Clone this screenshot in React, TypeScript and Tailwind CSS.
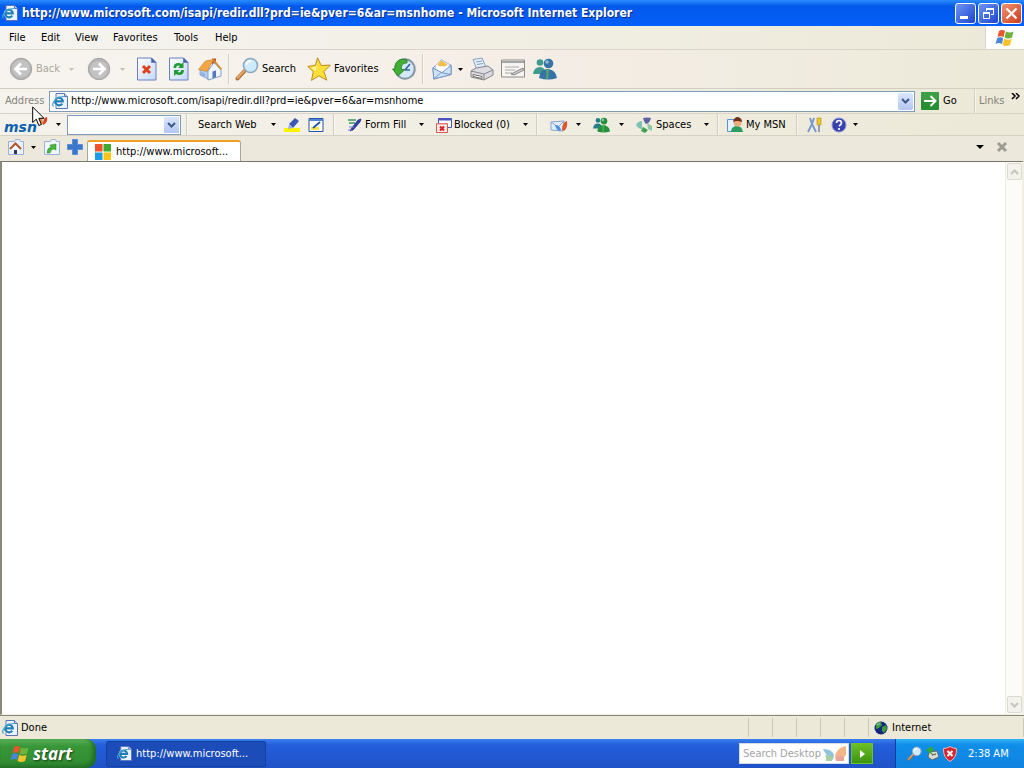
import type { ReactNode } from "react";

const pageUrl = "http://www.microsoft.com/isapi/redir.dll?prd=ie&pver=6&ar=msnhome";

function Caret({ dim = false }: { dim?: boolean }) {
  return (
    <svg viewBox="0 0 5 3" className={dim ? "h-[3px] w-[5px] text-[#c4c0b4]" : "h-[3px] w-[5px] text-black"}>
      <path d="M0 0h5L2.500 3z" fill="currentColor" />
    </svg>
  );
}

function Drop({ label, dim = false }: { label: string; dim?: boolean }) {
  return (
    <button aria-label={label} className="flex h-5 w-4 shrink-0 items-center justify-center">
      <Caret dim={dim} />
    </button>
  );
}

function Sep() {
  return <div className="w-[2px] shrink-0 self-stretch border-l border-[#cfccc0] bg-white/60" />;
}

function Tool({ label, children, className }: { label: string; children: ReactNode; className: string }) {
  return (
    <button aria-label={label} className={`flex shrink-0 items-center whitespace-nowrap ${className}`}>
      {children}
    </button>
  );
}

function IeIcon({ className = "h-4 w-4" }: { className?: string }) {
  return (
    <svg viewBox="0 0 16 16" className={`shrink-0 ${className}`}>
      <path d="M4 .5h8.500l3 3v12H4z" fill="#eaf2ff" stroke="#5a74b8" />
      <path d="M12.500.5v3h3" fill="#c0d0f0" stroke="#5a74b8" />
      <circle cx="6.800" cy="8.500" r="5" fill="#fff" />
      <path d="M10.200 10.600a3.800 3.800 0 1 1 .6-2.200H3.500" fill="none" stroke="#1f7fb5" strokeWidth="2.200" />
      <path d="M1.500 13.500C-1.500 10 5 3.500 12.500 3.500" fill="none" stroke="#45a5d0" strokeWidth="1.200" />
    </svg>
  );
}

function WindowsFlag({ className }: { className: string }) {
  return (
    <svg viewBox="0 0 20 18" className={className}>
      <path d="M4 2q3-2 6 0L8.500 8q-3-1.500-6 0z" fill="#e8562a" />
      <path d="M11 2.500q4 2 7.500 0L17 8.500q-4 2-7.500 0z" fill="#6fb33d" />
      <path d="M2.200 9q3-1.500 6 0L7 15q-3-2-6.500 0z" fill="#4a86d8" />
      <path d="M9.200 9.700q4 2 7.500 0L15 16q-3.500 2-7.500 0z" fill="#f6c22c" />
    </svg>
  );
}

function RoundArrow({ flip = false }: { flip?: boolean }) {
  return (
    <svg viewBox="0 0 24 24" className={flip ? "h-6 w-6 rotate-180" : "h-6 w-6"}>
      <circle cx="12" cy="12" r="10.700" fill="#b5b5b5" stroke="#a4a4a4" />
      <circle cx="12" cy="11.500" r="8.800" fill="#c3c3c3" />
      <path d="M18 12H7M12 6.500 6.500 12l5.500 5.500" fill="none" stroke="#fff" strokeWidth="2.600" />
    </svg>
  );
}

function PageIcon({ children }: { children: ReactNode }) {
  return (
    <svg viewBox="0 0 20 24" className="h-6 w-5">
      <defs>
        <linearGradient id="page" x1="0" y1="0" x2="1" y2="1">
          <stop offset="0" stopColor="#ffffff" />
          <stop offset="1" stopColor="#c3d8fb" />
        </linearGradient>
      </defs>
      <path d="M.5 1h14L19 5.500V23H.5z" fill="url(#page)" stroke="#6a80c0" />
      <path d="M14.500 1v4.500H19z" fill="#3f62b4" stroke="#4a68b2" strokeWidth=".6" />
      {children}
    </svg>
  );
}

function HomeIcon() {
  return (
    <svg viewBox="0 0 24 24" className="h-6 w-6">
      <path d="M14 1.500h4v6h-4z" fill="#c8521f" />
      <path d="m2 13 5-7 5 7v10L2 18z" fill="#b5cdf0" stroke="#7694bf" strokeWidth=".7" />
      <path d="M10 23v-9l6-8.500 7 7.500v6z" fill="#eef5ff" stroke="#6c8fc2" strokeWidth=".8" />
      <path d="m.5 12.500 7-8.500 8-1.500-6.500 12z" fill="#f4a545" stroke="#c7852c" strokeWidth=".7" />
      <path d="m15.500 3 8 9.500" stroke="#d98b32" strokeWidth="1.600" />
      <path d="M14.500 14.500 18 13.500v6.800l-3.500 1.200z" fill="#5578ba" />
      <path d="m3 15 4 1.500v3.500L3 18z" fill="#8fb2e4" />
    </svg>
  );
}

function Magnifier({ className }: { className: string }) {
  return (
    <svg viewBox="0 0 24 24" className={className}>
      <path d="m9.500 14-7 7.500" stroke="#b06a2c" strokeWidth="4" strokeLinecap="round" />
      <path d="m9 14-6.500 7" stroke="#e5a868" strokeWidth="2" strokeLinecap="round" />
      <circle cx="15.500" cy="8.500" r="7" fill="#cdebfb" stroke="#8ba6c6" strokeWidth="1.600" />
      <path d="M11 8q1-4 5-4" fill="none" stroke="#fff" strokeWidth="2" />
    </svg>
  );
}

function StarIcon() {
  return (
    <svg viewBox="0 0 24 24" className="h-6 w-6">
      <path d="m10.500.8 3.700 7.700 9.200-.4-6.500 6.500 3 8.600-8-4.400-7.400 4.600 1.800-8.800L.8 9.500l7.700-1.300z" fill="#fddf37" stroke="#b98d1d" />
      <path d="m10.500 4-1.300 5.500-5 1 4.500 3.500z" fill="#fff6a8" />
    </svg>
  );
}

function HistoryIcon() {
  return (
    <svg viewBox="0 0 24 24" className="h-6 w-6">
      <circle cx="13" cy="12" r="9.700" fill="#d3e9f8" stroke="#8596a6" strokeWidth="2" />
      <path d="m13 13 5-6M13 13h5" stroke="#37659b" strokeWidth="1.700" />
      <path d="M15 3C8 0 2 5 3 12H.5l5.500 7 7-6.500H9.500C9 8 11 6 15 6z" fill="#43ae35" stroke="#247a24" strokeWidth=".8" />
    </svg>
  );
}

function MailIcon() {
  return (
    <svg viewBox="0 0 22 24" className="h-6 w-[22px]">
      <path d="m1 11 9-9 11 6v10L2 23z" fill="#cfe2fb" stroke="#6f8ec5" />
      <path d="m4 8 6-6 9 5-1 5-7 4-7-4z" fill="#fff" stroke="#b7c6dd" strokeWidth=".7" />
      <path d="m6 7 4-4.500 7 4.500-2 2H8z" fill="#f5bc4c" />
      <path d="m1 11 10 5 10-8v10L2 23z" fill="#cbe3fb" stroke="#6f8ec5" />
      <path d="m2 23 8-7 11 2" fill="none" stroke="#6f8ec5" />
    </svg>
  );
}

function PrinterIcon() {
  return (
    <svg viewBox="0 0 24 24" className="h-6 w-6">
      <path d="m3 2.500 9-1.500 4 9-9 3z" fill="#e0edfd" stroke="#8ba0c0" />
      <path d="m6 5 6-1M7 7.500l6-1" stroke="#8ba0c0" />
      <path d="m1 14 5-3 12-2 5 4v5l-9 5-13-3z" fill="#dcdce0" stroke="#85858d" />
      <path d="m1 14 13 3 9-4M14 17v6" fill="none" stroke="#85858d" />
      <path d="m3 17.500 9 2v2l-9-2z" fill="#fff" stroke="#555" strokeWidth=".8" />
    </svg>
  );
}

function EditIcon() {
  return (
    <svg viewBox="0 0 24 20" className="h-5 w-6">
      <path d="M.5 1h23v17H.5z" fill="#f6f5f1" stroke="#8d8d8d" />
      <path d="M1 3h22" stroke="#a5a5a5" strokeWidth="2" />
      <path d="M4 8h14M4 11h10M4 14h7" stroke="#aaa" />
      <path d="m10 15 12-6 1 2-10 5z" fill="#ccc" stroke="#888" />
    </svg>
  );
}

function PeopleIcon({ className, front, back }: { className: string; front: string; back: string }) {
  return (
    <svg viewBox="0 0 24 22" className={className}>
      <circle cx="7" cy="4.500" r="3.300" fill={back} />
      <path d="M0 16q1-7 7-7 5 0 6 7z" fill={back} />
      <circle cx="15.500" cy="5.500" r="4.800" fill={front} />
      <path d="M6 20q1-9 9-9 8 1 9 9-9 3-18 0z" fill={front} />
      <path d="M13 21q1-5 0-9l3-1-1 10z" fill="#62bd4b" opacity=".7" />
      <circle cx="14" cy="4" r="1.800" fill="#fff" opacity=".5" />
    </svg>
  );
}

function MsnLogo() {
  return (
    <svg viewBox="0 0 45 20" className="h-5 w-[45px]">
      <text x="0" y="17" fontFamily="DejaVu Sans, sans-serif" fontSize="14" fontWeight="700" fontStyle="italic" fill="#0a62ad">msn</text>
      <path d="M34 8q-1-6 3-6 2 2 2 7-2 2-5-1z" fill="#f08a3c" />
      <path d="M39 10q0-8 4-8 1.500 5-4 8z" fill="#d9442c" />
    </svg>
  );
}

function Butterfly({ className }: { className: string }) {
  return (
    <svg viewBox="0 0 24 15" className={className}>
      <path d="M0 3q9 0 11 6l-1 5Q3 10 0 3z" fill="#8fc3dc" />
      <path d="M2 9q5 0 8 2l-1 4H3q1-3-1-6z" fill="#a9cf9f" />
      <path d="M12 9q3-8 11-9v9q-4 5-10 3z" fill="#f4b688" />
      <path d="M12 11q5-2 9 0v4h-8z" fill="#e9a597" />
    </svg>
  );
}

function DropArrow() {
  return (
    <svg viewBox="0 0 9 6" className="h-[6px] w-[9px]">
      <path d="m1 1 3.500 3.500L8 1" fill="none" stroke="#3f5684" strokeWidth="2" />
    </svg>
  );
}

function TitleBar() {
  return (
    <header className="flex h-[26px] shrink-0 items-center bg-linear-to-b from-[#2a8bff] via-[#0358ea] via-25% to-[#0560fb] pr-[2px] pl-[2px] text-white">
      <IeIcon />
      <h1 className="ml-1 flex-1 truncate font-[DejaVu_Sans_Condensed,sans-serif] text-[12px] font-bold [text-shadow:1px_1px_#0a2c8a]">
        {pageUrl} - Microsoft Internet Explorer
      </h1>
      <div className="flex gap-[2px]">
        <button aria-label="Minimize" className="flex h-[21px] w-[21px] items-center justify-center rounded-[3px] border border-white bg-linear-to-br from-[#6f92f2] to-[#1c44cf]">
          <svg viewBox="0 0 19 19" className="h-[19px] w-[19px]"><path d="M4 12h8v3H4z" fill="#fff" /></svg>
        </button>
        <button aria-label="Restore" className="flex h-[21px] w-[21px] items-center justify-center rounded-[3px] border border-white bg-linear-to-br from-[#6f92f2] to-[#1c44cf]">
          <svg viewBox="0 0 19 19" className="h-[19px] w-[19px]" fill="none" stroke="#fff">
            <path d="M7.500 7V4.500h7v6H12" /><path d="M7 5h8" strokeWidth="2" />
            <path d="M4.500 8.500h6v6h-6z" /><path d="M4 9h7" strokeWidth="2" />
          </svg>
        </button>
        <button aria-label="Close" className="flex h-[21px] w-[21px] items-center justify-center rounded-[3px] border border-white bg-linear-to-br from-[#f0906f] to-[#cc3a12]">
          <svg viewBox="0 0 19 19" className="h-[19px] w-[19px]"><path d="m4.500 4.500 10 10M14.500 4.500l-10 10" stroke="#fff" strokeWidth="2.200" /></svg>
        </button>
      </div>
    </header>
  );
}

function MenuBar() {
  return (
    <nav className="flex h-6 shrink-0 items-center border-b border-[#d8d4c8] bg-linear-to-r from-[#f6f4f0] to-[#ece9d8] pl-[9px]">
      <button className="w-8 text-left">File</button>
      <button className="w-[34px] text-left">Edit</button>
      <button className="w-[38px] text-left">View</button>
      <button className="w-[61px] text-left">Favorites</button>
      <button className="w-[41px] text-left">Tools</button>
      <button className="w-8 text-left">Help</button>
      <div className="ml-auto flex h-full w-[39px] items-center justify-center border-l border-[#d8d4c8] bg-white">
        <WindowsFlag className="h-[18px] w-5" />
      </div>
    </nav>
  );
}

function StandardButtons() {
  return (
    <div className="flex h-[39px] shrink-0 items-center border-b border-[#d2cfc2] bg-linear-to-r from-[#f7f4ef] via-[#f5eee7] to-[#ece9d8] py-1 pl-[9px]">
      <Tool label="Back" className="w-[54px] gap-[3px] text-[#aaa79c]"><RoundArrow />Back</Tool>
      <Drop label="Back history" dim />
      <Tool label="Forward" className="ml-2 w-[27px]"><RoundArrow flip /></Tool>
      <Drop label="Forward history" dim />
      <Tool label="Stop" className="ml-[7px] w-8">
        <PageIcon><path d="m6 9 7 7M13 9l-7 7" stroke="#e2401b" strokeWidth="3" /></PageIcon>
      </Tool>
      <Tool label="Refresh" className="w-[29px]">
        <PageIcon>
          <path d="M4.500 11q0-5 5-5 2 0 3 1l2-2v6H9l2-2q-3-1.500-4 2z" fill="#249a34" />
          <path d="M15 13q0 5-5 5-2 0-3-1l-2 2v-6h5.500l-2 2q3 1.500 4-2z" fill="#249a34" />
        </PageIcon>
      </Tool>
      <Tool label="Home" className="w-[30px]"><HomeIcon /></Tool>
      <Sep />
      <Tool label="Search" className="ml-[5px] w-[72px] gap-[3px]"><Magnifier className="h-6 w-6" />Search</Tool>
      <Tool label="Favorites" className="w-[85px] gap-[3px]"><StarIcon />Favorites</Tool>
      <Tool label="History" className="w-[30px]"><HistoryIcon /></Tool>
      <Sep />
      <Tool label="Mail" className="ml-2 w-5"><MailIcon /></Tool>
      <Drop label="Mail options" />
      <Tool label="Print" className="ml-[2px] w-[31px]"><PrinterIcon /></Tool>
      <Tool label="Edit" className="w-8"><EditIcon /></Tool>
      <Tool label="Messenger" className="w-8"><PeopleIcon className="h-[22px] w-6" front="#3573a8" back="#3f9c8c" /></Tool>
    </div>
  );
}

function AddressBar() {
  return (
    <form className="flex h-[25px] shrink-0 items-center border-b border-[#d8d4c8] bg-linear-to-r from-[#f6f3ee] to-[#ece9d8] pl-[5px]">
      <label htmlFor="address" className="w-11 text-[#85837a]">Address</label>
      <div className="flex h-[21px] flex-1 items-center border border-[#7f9db9] bg-white pr-px pl-[2px]">
        <IeIcon />
        <input id="address" defaultValue={pageUrl} className="h-4 min-w-0 flex-1 pl-[3px] outline-none" />
        <button type="button" aria-label="Address history" className="flex h-[17px] w-[15px] items-center justify-center rounded-[2px] bg-linear-to-b from-[#dbe5fe] to-[#b3c7f4]"><DropArrow /></button>
      </div>
      <button type="button" className="ml-[6px] flex w-[53px] items-center gap-1">
        <svg viewBox="0 0 18 18" className="h-[18px] w-[18px]">
          <rect width="18" height="18" rx="1" fill="#288f35" />
          <path d="M0 0h18v8H0z" fill="#4fae54" opacity=".5" />
          <path d="M3 9h11M9.500 4l5 5-5 5" fill="none" stroke="#fff" strokeWidth="2" />
        </svg>
        Go
      </button>
      <Sep />
      <button type="button" className="ml-[3px] flex w-[45px] items-start text-[#85837a]">
        <span className="w-8 text-left">Links</span>
        <svg viewBox="0 0 9 7" className="h-[7px] w-[9px]"><path d="m1 0 3 3-3 3M5 0l3 3-3 3" fill="none" stroke="#000" strokeWidth="1.500" /></svg>
      </button>
    </form>
  );
}

function MsnToolbar() {
  return (
    <div className="flex h-[22px] shrink-0 items-center border-b border-[#d5d2c5] bg-linear-to-r from-[#f5f2ec] to-[#ece9d8] pl-1">
      <Tool label="MSN" className="w-[46px]"><MsnLogo /></Tool>
      <Drop label="MSN menu" />
      <div className="ml-px flex h-5 w-[114px] items-center border border-[#7f9db9] bg-white pr-px">
        <input aria-label="Search terms" className="h-4 min-w-0 flex-1 px-1 outline-none" />
        <button aria-label="Recent searches" className="flex h-4 w-[15px] items-center justify-center bg-linear-to-b from-[#dbe5fe] to-[#b3c7f4]"><DropArrow /></button>
      </div>
      <div className="ml-[5px] flex self-stretch"><Sep /></div>
      <Tool label="Search Web" className="ml-[10px] w-[67px]">Search Web</Tool>
      <Drop label="Search options" />
      <Tool label="Highlight" className="ml-[3px] w-6">
        <svg viewBox="0 0 16 16" className="h-4 w-4">
          <path d="M0 11h16v4H0z" fill="#fff200" />
          <path d="m5 7 6-6 4 3-6 7z" fill="#3c57b4" /><path d="m5 7 4 4-5 1z" fill="#9bb0e0" />
        </svg>
      </Tool>
      <Tool label="Highlight options" className="w-[25px]">
        <svg viewBox="0 0 16 16" className="h-4 w-4">
          <path d="M1 1.500h14v13H1z" fill="#fff" stroke="#2b55a0" /><path d="M1 3h14" stroke="#4e84d4" strokeWidth="2" />
          <path d="M3 10h8v3H3z" fill="#f5e94a" /><path d="m5 11 7-6" stroke="#2b55a0" strokeWidth="2" />
        </svg>
      </Tool>
      <Sep />
      <Tool label="Form Fill" className="ml-3 w-[66px] gap-[2px]">
        <svg viewBox="0 0 16 16" className="h-4 w-4">
          <path d="M1 3h8M2 6h6" stroke="#3b9a63" strokeWidth="1.500" />
          <path d="m4 12 7-9 3-1-1 3-7 8-3 1z" fill="#3442ae" stroke="#1a247c" strokeWidth=".7" /><path d="M2 10h5M1 13h4" stroke="#7a7fd8" />
        </svg>
        Form Fill
      </Tool>
      <Drop label="Form fill options" />
      <Tool label="Blocked (0)" className="ml-[7px] w-[81px] gap-[2px]">
        <svg viewBox="0 0 16 16" className="h-4 w-4">
          <path d="M2.500 1.500h13v9h-13z" fill="#fff" stroke="#4a55be" /><path d="M2 2.500h14" stroke="#4a55be" strokeWidth="2" />
          <path d="M.5 6.500h11v9H.5z" fill="#ffeaea" stroke="#d25a5a" /><path d="M.5 7h11" stroke="#e08a8a" />
          <path d="m4 9.500 4 4M8 9.500l-4 4" stroke="#d42222" strokeWidth="2" />
        </svg>
        Blocked (0)
      </Tool>
      <Drop label="Blocked options" />
      <div className="ml-[3px] flex self-stretch"><Sep /></div>
      <Tool label="Hotmail" className="ml-3 w-5">
        <svg viewBox="0 0 18 16" className="h-4 w-[18px]">
          <path d="m1 5 13-1-1 10-12-1z" fill="#e1eefb" stroke="#8aa4d2" /><path d="m1 5 7 5 6-6" fill="none" stroke="#8aa4d2" />
          <path d="M11 13q-1-5-6-5 1 5 5 6z" fill="#4b8fe0" /><path d="M12 13q0-8 5-9 1 7-3 10z" fill="#e0562c" />
        </svg>
      </Tool>
      <Drop label="Mail menu" />
      <Tool label="Messenger contacts" className="ml-[7px] w-5"><PeopleIcon className="h-4 w-[17px]" front="#25913d" back="#277d8b" /></Tool>
      <Drop label="Contacts menu" />
      <Tool label="Spaces" className="ml-[7px] w-[62px] gap-1">
        <svg viewBox="0 0 16 16" className="h-4 w-4">
          <path d="M0 8q2-4 6-4v8q-4 0-6-4z" fill="#7fc3b4" /><path d="M7 1q4-1 8 0-1 5-5 6-2-2-3-6z" fill="#5a62a4" />
          <path d="m11 6 5 3v5l-4-2z" fill="#8cc9a3" /><path d="m7 10 5 3-3 3-4-2z" fill="#3fa253" />
        </svg>
        Spaces
      </Tool>
      <Drop label="Spaces menu" />
      <div className="ml-[3px] flex self-stretch"><Sep /></div>
      <Tool label="My MSN" className="ml-2 w-[69px] gap-[3px]">
        <svg viewBox="0 0 16 16" className="h-4 w-4">
          <path d="M.5 2.500h9v12h-9z" fill="#e4f1ff" stroke="#5e92cf" /><path d="M4 14q1-5 6-5 5 0 6 6H4z" fill="#2c9d62" />
          <circle cx="10.500" cy="5.500" r="4" fill="#efae79" /><path d="M6 5q1-5 5-5 4 1 4 5-5-2-9 0z" fill="#702f1b" />
        </svg>
        My MSN
      </Tool>
      <Sep />
      <Tool label="Settings" className="ml-[9px] w-6">
        <svg viewBox="0 0 15 16" className="h-4 w-[15px]">
          <path d="M1 15 5 7 3 1M9 15 5 7l2-6" fill="none" stroke="#7a9bcd" strokeWidth="2" />
          <path d="M10 1h4v7h-4z" fill="#eec82a" stroke="#a88b17" strokeWidth=".6" /><path d="M12 8v7" stroke="#7089ad" strokeWidth="1.500" />
        </svg>
      </Tool>
      <Tool label="Help" className="w-4">
        <svg viewBox="0 0 16 16" className="h-4 w-4">
          <circle cx="8" cy="8" r="7" fill="#3842ae" stroke="#8b92da" />
          <path d="M5.500 6q0-2.500 2.500-2.500T10.500 6Q10.500 7.500 8 9M8 11v2" fill="none" stroke="#fff" strokeWidth="1.700" />
        </svg>
      </Tool>
      <Drop label="Help menu" />
    </div>
  );
}

function TabBar() {
  return (
    <div className="flex h-[25px] shrink-0 items-start bg-[#ece9dc] pr-4 pl-2">
      <Tool label="Home tab" className="h-[22px] w-[17px]">
        <svg viewBox="0 0 16 16" className="h-4 w-4">
          <path d="M.5 2.500h6l1-2h4l1 2h3v13H.5z" fill="#e9f1fe" stroke="#9ab2da" />
          <path d="m2 10 5.500-5.500L13 10" fill="none" stroke="#b4562a" strokeWidth="2" /><path d="M4 10l3.500-3.500L11 10v5H4z" fill="#f6faff" /><path d="M6 11h3v4H6z" fill="#28355e" />
        </svg>
      </Tool>
      <div className="flex h-[22px] items-center"><Drop label="Home options" /></div>
      <Tool label="Open tabs" className="ml-[3px] h-[22px] w-[23px]">
        <svg viewBox="0 0 16 16" className="h-4 w-4">
          <path d="M.5 2.500h6l1-2h4l1 2h3v13H.5z" fill="#eef5fb" stroke="#9ab2da" />
          <path d="M3 14q0-5 4-6L6 6l6-1v6l-2-1q-3 0-4 4z" fill="#49b33a" stroke="#2b8a2b" strokeWidth=".5" />
        </svg>
      </Tool>
      <Tool label="New tab" className="h-[22px] w-5">
        <svg viewBox="0 0 16 16" className="h-4 w-4"><path d="M5.500.5h5v5h5v5h-5v5h-5v-5h-5v-5h5z" fill="#3a77c9" stroke="#5a8fd6" /></svg>
      </Tool>
      <button className="flex h-[21px] w-[154px] items-center gap-[5px] self-end rounded-t-[3px] border border-t-2 border-b-0 border-[#a9a798] border-t-[#f0a020] bg-white pl-[7px]">
        <svg viewBox="0 0 16 16" className="h-4 w-4">
          <path d="M0 0h7.500v7.500H0z" fill="#f0502a" /><path d="M8.500 0H16v7.500H8.500z" fill="#3dab2b" />
          <path d="M0 8.500h7.500V16H0z" fill="#1d9be8" /><path d="M8.500 8.500H16V16H8.500z" fill="#fbc314" />
        </svg>
        http://www.microsoft...
      </button>
      <div className="ml-auto flex h-[22px] items-center gap-3">
        <button aria-label="Tab list" className="flex h-5 w-2 items-center justify-center">
          <svg viewBox="0 0 8 4" className="h-1 w-2"><path d="M0 0h8L4 4z" /></svg>
        </button>
        <button aria-label="Close tab">
          <svg viewBox="0 0 12 12" className="h-3 w-3"><path d="m2 2 8 8M10 2l-8 8" stroke="#9d9b90" strokeWidth="3" /></svg>
        </button>
      </div>
    </div>
  );
}

function ScrollButton({ down = false }: { down?: boolean }) {
  return (
    <button aria-label={down ? "Scroll down" : "Scroll up"} className="flex h-[17px] w-[15px] items-center justify-center rounded-[2px] border border-[#dcdad0] bg-[#f3f2ec]">
      <svg viewBox="0 0 9 6" className={down ? "h-[6px] w-[9px] rotate-180" : "h-[6px] w-[9px]"}>
        <path d="m1 5 3.500-3.500L8 5" fill="none" stroke="#c6c4b8" strokeWidth="2" />
      </svg>
    </button>
  );
}

function StatusBar() {
  return (
    <footer className="flex h-6 shrink-0 items-center border-t border-[#8a8878] bg-[#ece9d8] py-[2px] pl-[2px]">
      <IeIcon />
      <span className="ml-[3px] flex-1">Done</span>
      {[0, 1, 2, 3, 4].map((n) => (
        <div key={n} className="w-6 self-stretch border-l border-[#cbc8b8]" />
      ))}
      <div className="flex w-[156px] items-center gap-1 self-stretch border-x border-[#cbc8b8] pl-[5px]">
        <svg viewBox="0 0 14 14" className="h-[14px] w-[14px]">
          <circle cx="7" cy="7" r="6.500" fill="#13277e" />
          <path d="M2 3q3-3 5-2l1 3-3 3-3 1zM8 6l4-2 1 4-3 4-2-2z" fill="#3f9c3c" /><path d="M3 4q2-2 3-1" fill="none" stroke="#8bd1f0" />
        </svg>
        Internet
      </div>
    </footer>
  );
}

function Taskbar() {
  return (
    <div className="flex h-[29px] shrink-0 items-center bg-linear-to-b from-[#3b80ee] via-[#245edb] via-20% to-[#1f52c8] text-white">
      <button className="flex h-full w-24 items-center gap-[3px] rounded-r-[10px] bg-linear-to-b from-[#5bb35b] via-[#389638] via-25% to-[#2f8a30] pl-[10px] font-[Open_Sans,sans-serif] text-[17px] font-bold italic shadow-[inset_-3px_-2px_4px_#1f6a22] [text-shadow:1px_1px_2px_#163f16]">
        <WindowsFlag className="h-[18px] w-5" />
        start
      </button>
      <button className="ml-[10px] flex h-[26px] w-40 items-center gap-1 rounded-[2px] border border-[#16429f] bg-[#1b4cb8] pl-[10px]">
        <IeIcon className="h-[15px] w-[15px]" />
        http://www.microsoft...
      </button>
      <form className="ml-auto flex items-center gap-[2px]">
        <div className="flex h-[21px] w-[110px] items-center border border-[#d5dbe6] bg-white pr-px">
          <input aria-label="Search Desktop" placeholder="Search Desktop" className="h-4 min-w-0 flex-1 pl-[3px] text-black outline-none placeholder:text-[#a3a3a3]" />
          <Butterfly className="h-[15px] w-6" />
        </div>
        <button type="button" aria-label="Search" className="flex h-[21px] w-[22px] items-center justify-center border border-[#6fc02f] bg-linear-to-b from-[#6cc024] to-[#3c9410]">
          <svg viewBox="0 0 5 8" className="h-2 w-[5px]"><path d="m0 0 5 4-5 4z" fill="#fff" /></svg>
        </button>
      </form>
      <div className="ml-[22px] flex h-full w-[129px] items-center gap-[3px] border-l border-[#0b3f9c] bg-linear-to-b from-[#2fb4f6] via-[#0f8fea] via-20% to-[#0f82df] pl-[11px]">
        <Magnifier className="h-[15px] w-[15px]" />
        <svg viewBox="0 0 15 15" className="h-[15px] w-[15px]">
          <path d="m4 6 8-1 2 6-7 3-4-3z" fill="#d8dccf" stroke="#555" strokeWidth=".8" /><path d="m1 4 5-4 3 5-3 .5 2 4-4-3z" fill="#33a737" /><path d="m7 9 4-1" stroke="#444" />
        </svg>
        <svg viewBox="0 0 14 16" className="h-4 w-[14px]">
          <path d="M7 .5q3 2 6.500 2 .5 9-6.500 13Q0 11.500.5 2.500q3.500 0 6.500-2z" fill="#d5242b" stroke="#f1b7b7" /><path d="m4.500 5 5 5M9.500 5l-5 5" stroke="#fff" strokeWidth="2" />
        </svg>
        <time className="ml-2 whitespace-nowrap">2:38 AM</time>
      </div>
    </div>
  );
}

export default function App() {
  return (
    <div className="relative flex min-h-screen flex-col bg-white font-[DejaVu_Sans_Condensed,sans-serif] text-[11px] leading-4 text-black">
      <TitleBar />
      <MenuBar />
      <StandardButtons />
      <AddressBar />
      <MsnToolbar />
      <TabBar />
      <main className="flex flex-1 justify-end border-t border-r-2 border-b border-l-2 border-t-[#77756a] border-r-[#f1efe2] border-b-[#f1efe2] border-l-[#8a8878] bg-white">
        <div className="flex w-[17px] flex-col items-center justify-between border-l border-[#eeede5] bg-[#fbfbf8] py-px">
          <ScrollButton />
          <ScrollButton down />
        </div>
      </main>
      <StatusBar />
      <Taskbar />
      <svg viewBox="0 0 13 21" className="pointer-events-none absolute top-[106px] left-8 h-[21px] w-[13px]">
        <path d="M.7 1v15.500l3.600-3.300 2.500 6.300 2.600-1.100-2.600-6.100h5.200z" fill="#fff" stroke="#000" />
      </svg>
    </div>
  );
}
